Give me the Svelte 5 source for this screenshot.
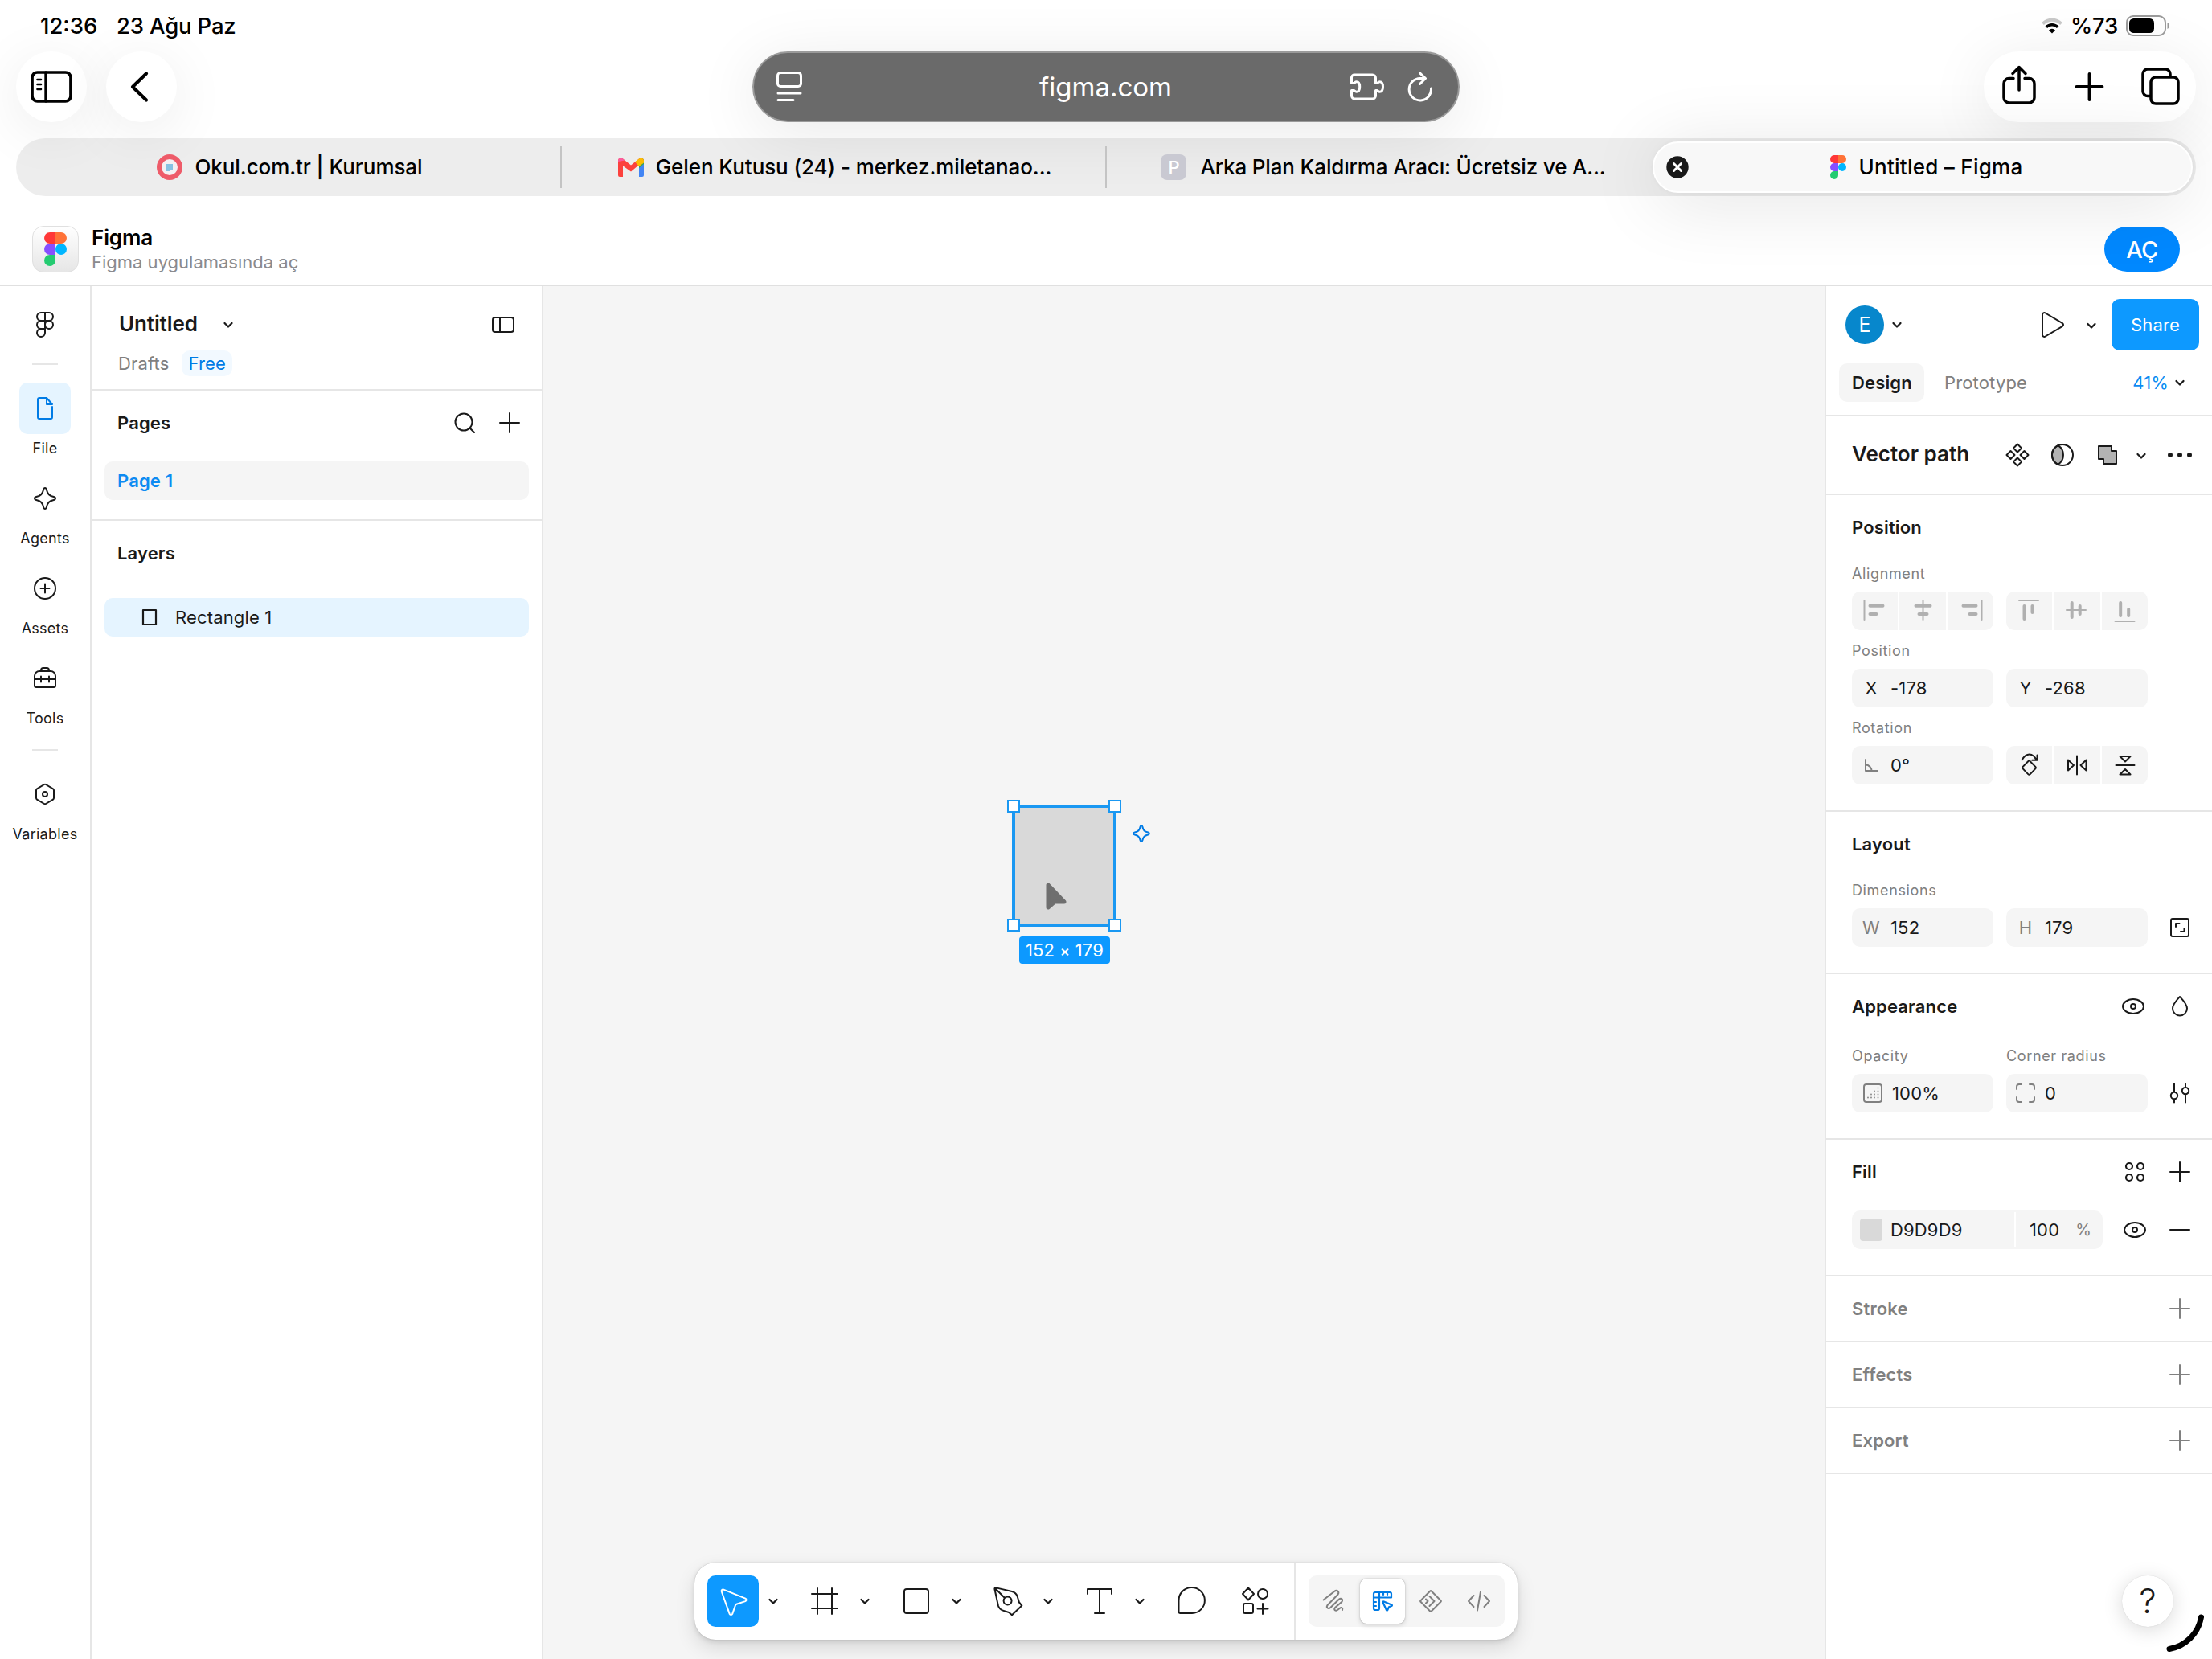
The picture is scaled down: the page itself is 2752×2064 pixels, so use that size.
<script>
    // every icon sits in a 48x48 box; w = stroke width, fill = solid shape
    const circle = (x, y, r) => `M${x - r} ${y}a${r} ${r} 0 1 0 ${2 * r} 0a${r} ${r} 0 1 0 ${-2 * r} 0z`;

    const icons = {
        figma: [{ d: 'M24 9h-5a5 5 0 0 0 0 10h5zM24 9h5a5 5 0 0 1 0 10h-5M24 19h-5a5 5 0 0 0 0 10h5zM24 29h-5a5 5 0 1 0 5 5z' + circle(29, 24, 5) }],
        file: [{ d: 'M26 11h-9a2 2 0 0 0-2 2v22a2 2 0 0 0 2 2h14a2 2 0 0 0 2-2V22M26 11v8h7z' }],
        sparkle: [{ d: 'M24 11c1 0 1.8 1 2.2 3 .8 4 3.8 7 7.8 7.8 2 .4 3 1.2 3 2.2s-1 1.8-3 2.2c-4 .8-7 3.8-7.8 7.8-.4 2-1.2 3-2.2 3s-1.8-1-2.2-3c-.8-4-3.8-7-7.8-7.8-2-.4-3-1.2-3-2.2s1-1.8 3-2.2c4-.8 7-3.8 7.8-7.8.4-2 1.2-3 2.2-3z' }],
        assets: [{ d: circle(24, 24, 13) + 'M24 18.5v11M18.5 24h11' }],
        tools: [{ d: 'M19 15v-1a3 3 0 0 1 3-3h4a3 3 0 0 1 3 3v1M11 33V21a6 6 0 0 1 6-6h14a6 6 0 0 1 6 6v12a2 2 0 0 1-2 2H13a2 2 0 0 1-2-2zM11 25h26M19 21.5v7M29 21.5v7' }],
        variables: [{ d: 'M23 12q1-.6 2 0l9 5.4q1 .6 1 1.8v9.6q0 1.200-1 1.8L25 36q-1 .6-2 0l-9-5.400q-1-.6-1-1.8v-9.600q0-1.200 1-1.8z' + circle(24, 24, 3) }],
        chevron: [{ d: 'M19.500 22l4.500 4.500 4.500-4.500', w: 2.3 }],
        panel: [{ d: 'M14 15h20a3 3 0 0 1 3 3v12a3 3 0 0 1-3 3H14a3 3 0 0 1-3-3V18a3 3 0 0 1 3-3zM20 15v18' }],
        search: [{ d: circle(23, 23, 10.5) + 'M30.500 30.500l5.500 5.500' }],
        plus: [{ d: 'M24 12v24M12 24h24' }],
        minus: [{ d: 'M12 24h24' }],
        layer: [{ d: 'M16 15h16v18H16z', w: 2.2 }],
        play: [{ d: 'M11 11.500a2.400 2.400 0 0 1 3.700-2L36 22.200a2.200 2.200 0 0 1 0 3.700L14.700 38.500a2.400 2.400 0 0 1-3.700-2z' }],
        component: [{ d: 'M24 10.500l5 5-5 5-5-5zM24 27.500l5 5-5 5-5-5zM15.500 19l5 5-5 5-5-5zM32.500 19l5 5-5 5-5-5z' }],
        mask: [{ d: 'M18.500 12.200a14 14 0 0 1 0 23.600A13 13 0 0 1 18.500 12.200z', fill: '#b3b3b3' }, { d: circle(24, 24, 13) }],
        union: [{ d: 'M13 13h16v6h6v16H19v-6h-6z', fill: '#b3b3b3' }],
        dots: [{ d: circle(12, 24, 2), w: 2, fill: 'currentColor' }, { d: circle(24, 24, 2), fill: 'currentColor' }, { d: circle(36, 24, 2), fill: 'currentColor' }],
        alignLeft: [{ d: 'M10.500 11v24' }, { d: 'M17.500 17.800h16M17.500 28h8', w: 4 }],
        alignCenter: [{ d: 'M24.500 11v24' }, { d: 'M15.500 17.800h18M19.500 28h10', w: 4 }],
        alignRight: [{ d: 'M37.500 11v24' }, { d: 'M14.500 17.800h16M22.500 28h8', w: 4 }],
        alignTop: [{ d: 'M11 11h24' }, { d: 'M17.500 18v16M27.500 18v8', w: 4 }],
        alignMiddle: [{ d: 'M11 23h24' }, { d: 'M17.700 14v18M27.700 18v10', w: 4 }],
        alignBottom: [{ d: 'M11.500 37h24' }, { d: 'M18.200 14v16M28.200 22v8', w: 4 }],
        angle: [{ d: 'M17 17v14h15M17 23.500a7.500 7.500 0 0 1 7.500 7.500' }],
        rotate: [{ d: 'M23.500 18.500q.7 0 1.300.7l6.700 6.900q1 1 0 2l-6.700 7q-1.300 1.300-2.600 0l-6.700-7q-1-1 0-2l6.700-6.900q.6-.7 1.300-.7zM14.500 17.500c5.500-9.300 13.500-9.300 18 0M33.500 11.500v6.300h-6.300' }],
        flipH: [{ d: 'M24 12.500v23M13 17.500v13l7-6.500zM35.500 17.500v13l-7-6.500z' }],
        flipV: [{ d: 'M12.500 24h23M17.500 13h13L24 19.500zM17.500 35.500h13L24 29z' }],
        resize: [{ d: 'M15 13h18a2 2 0 0 1 2 2v18a2 2 0 0 1-2 2H15a2 2 0 0 1-2-2V15a2 2 0 0 1 2-2zM19 23v-4h4.500M29.500 25v4H25' }],
        eye: [{ d: 'M24 15c-7.500 0-13 4.800-13 9s5.500 9 13 9 13-4.800 13-9-5.500-9-13-9z' + circle(24, 24, 3) }],
        drop: [{ d: 'M24 12c4 4.300 9 9.500 9 14.500a9 9 0 0 1-18 0c0-5 5-10.200 9-14.500z' }],
        opacity: [
            { d: 'M16 13h16a3 3 0 0 1 3 3v16a3 3 0 0 1-3 3H16a3 3 0 0 1-3-3V16a3 3 0 0 1 3-3z' },
            { d: 'M18 29.500v.01M22 29.500v.01M26 29.500v.01M30.500 29.500v.01M22 25.500v.01M26 25.500v.01M30.500 25.500v.01M26 21.500v.01M30.500 21.500v.01M30.500 17.500v.01', w: 1.8 }
        ],
        corners: [{ d: 'M13 19v-3a3 3 0 0 1 3-3h3M29 13h3a3 3 0 0 1 3 3v3M35 29v3a3 3 0 0 1-3 3h-3M19 35h-3a3 3 0 0 1-3-3v-3' }],
        sliders: [{ d: 'M17 12.500V22M17 31.500v4M31 12.500v4M31 26v9.500' + circle(17, 27, 4.2) + circle(31, 21, 4.2) }],
        styles: [{ d: circle(17, 17, 4) + circle(31, 17, 4) + circle(17, 31, 4) + circle(31, 31, 4), w: 2.2 }],
        move: [{ d: 'M9.700 12a1.900 1.900 0 0 1 2.500-2.400l27.200 11a1.900 1.900 0 0 1-.1 3.500l-11.100 3.700a2 2 0 0 0-1.200 1.200l-3.800 10.900a1.900 1.900 0 0 1-3.500 0z' }],
        frame: [{ d: 'M15 8v32M33 8v32M8 15h32M8 33h32' }],
        rect: [{ d: 'M12 9h24a3 3 0 0 1 3 3v24a3 3 0 0 1-3 3H12a3 3 0 0 1-3-3V12a3 3 0 0 1 3-3z' }],
        pen: [{ d: 'M7.500 9.200q-.4-2.200 1.800-1.800L29 12c3.500 1 5.500 2.700 6.600 6l2.400 7.500 3.300 4L29 41.300 25.200 38l-7.400-2.400c-3.300-1-5-3-6-6.400zM8 8l12 12' + circle(23.6, 23.6, 5) }],
        text: [{ d: 'M9 15V9h30v6M24 9v30M18 39h12' }],
        comment: [{ d: 'M8.500 37V23.500A16.200 16 0 1 1 25 39H10.500a2 2 0 0 1-2-2z' }],
        actions: [{ d: 'M15 7.500l7 7.500-7 7.500L8 15zM33 27v13M26.500 33.500h13M11 27h8a2 2 0 0 1 2 2v8a2 2 0 0 1-2 2h-8a2 2 0 0 1-2-2v-8a2 2 0 0 1 2-2z' + circle(33, 15, 6) }],
        draw: [{ d: 'M10.500 22.500L24 12c3.500-2.700 6.800.3 4.500 3.800L15.500 29c-2 3 1 5.200 3.800 3L30 21.500c2.700-2 5.200.5 3.500 3.200L25 32c-2 2.800.5 4.800 3 3l3-2.300c2.200-1.500 4 .3 3 2.300' }],
        design: [{ d: 'M13 15a2 2 0 0 1 2-2h18a2 2 0 0 1 2 2v4.500H20V33a2 2 0 0 1-2 2h-3a2 2 0 0 1-2-2zM20 13v6.500h-7M25 13v3M30 13v3M13 25h3M13 30h3M24.500 25.500q-.3-1.500 1.200-1l9.600 4q1.300.8 0 1.500l-3.300 1.300-1.600 3.500q-.8 1.300-1.600 0z', w: 2.2 }],
        dev: [{ d: 'M24.800 11.500l11.700 11.700q.8.8 0 1.600L24.800 36.500q-.8.800-1.600 0L11.500 24.800q-.8-.8 0-1.600l11.700-11.700q.8-.8 1.600 0zM22.500 18l6 6-6 6M18 21.500l2.500 2.500-2.500 2.500' }],
        code: [{ d: 'M17.500 17L11 24l6.500 7M30.500 17l6.500 7-6.500 7M26 12.500l-4 23' }]
    };

    const tabs = [
        { icon: 'okul', title: 'Okul.com.tr | Kurumsal' },
        { icon: 'gmail', title: 'Gelen Kutusu (24) - merkez.miletanao...' },
        { icon: 'letter', title: 'Arka Plan Kaldırma Aracı: Ücretsiz ve A...' },
        { icon: 'figma', title: 'Untitled – Figma', active: true }
    ];

    const railItems = [
        { icon: 'file', label: 'File', active: true },
        { icon: 'sparkle', label: 'Agents' },
        { icon: 'assets', label: 'Assets' },
        { icon: 'tools', label: 'Tools' }
    ];

    const tools = ['move', 'frame', 'rect', 'pen', 'text'];
    const modes = ['draw', 'design', 'dev', 'code'];
    const alignments = [
        ['alignLeft', 'alignCenter', 'alignRight'],
        ['alignTop', 'alignMiddle', 'alignBottom']
    ];
    const emptySections = ['Stroke', 'Effects', 'Export'];
</script>

{#snippet icon(name)}
    <svg class="icon" viewBox="0 0 48 48">
        {#each icons[name] as p}
            <path d={p.d} fill={p.fill ?? 'none'} stroke="currentColor" stroke-width={p.w ?? 2} stroke-linecap="round" stroke-linejoin="round" />
        {/each}
    </svg>
{/snippet}

{#snippet figmaMark(cls)}
    <svg class={cls} viewBox="0 0 20 30">
        <path d="M10 0H5a5 5 0 0 0 0 10h5z" fill="#ff3737" />
        <path d="M10 0h5a5 5 0 0 1 0 10h-5z" fill="#ff7237" />
        <path d="M10 10H5a5 5 0 0 0 0 10h5z" fill="#874fff" />
        <circle cx="15" cy="15" r="5" fill="#00b6ff" />
        <path d="M10 20H5a5 5 0 1 0 5 5z" fill="#24cb71" />
    </svg>
{/snippet}

<div class="screen">
    <header class="browser">
        <div class="status">
            <span class="clock">12:36</span>
            <span class="date">23 Ağu Paz</span>
            <svg class="wifi" viewBox="0 0 28 20">
                <path d="M2.500 7.500a16.500 16.500 0 0 1 23 0" fill="none" stroke="#c9c9c9" stroke-width="4" />
                <path d="M6.800 11.800a10.200 10.200 0 0 1 14.400 0" fill="none" stroke="#000" stroke-width="3.600" />
                <path d="M14 19.500l-4-4a5.600 5.600 0 0 1 8 0z" fill="#000" />
            </svg>
            <span class="percent">%73</span>
            <svg class="battery" viewBox="0 0 56 26">
                <rect x="1" y="1" width="48" height="24" rx="8" fill="none" stroke="#9b9b9b" stroke-width="2" />
                <rect x="4" y="4" width="31" height="18" rx="5.500" fill="#000" />
                <path d="M51.500 9v8c3.300-1.300 3.300-6.700 0-8z" fill="#9b9b9b" />
            </svg>
        </div>

        <div class="nav">
            <div class="nav-side">
                <div class="round">
                    <svg width="52" height="40" viewBox="0 0 52 40" fill="none" stroke="#000" stroke-width="3.700" stroke-linecap="round">
                        <rect x="2" y="2" width="48" height="36" rx="6.500" />
                        <path d="M19 2v36" stroke-width="3.400" />
                        <path d="M8.500 11h4.500M8.500 17h4.500M8.500 23h4.500" stroke-width="2.600" />
                    </svg>
                </div>
                <div class="round">
                    <svg width="26" height="40" viewBox="0 0 26 40" fill="none" stroke="#000" stroke-width="4.200" stroke-linecap="round" stroke-linejoin="round">
                        <path d="M21 3.500L4 20l17 16.500" />
                    </svg>
                </div>
            </div>
            <div class="address">
                <svg width="32" height="38" viewBox="0 0 32 38" fill="none" stroke="#fff" stroke-width="3" stroke-linecap="round">
                    <rect x="1.500" y="1.500" width="29" height="17" rx="3.500" />
                    <path d="M2 27h28M2 35.500h19" />
                </svg>
                <span class="url">figma.com</span>
                <svg class="puzzle" width="42" height="34" viewBox="0 0 42 34" fill="none" stroke="#fff" stroke-width="3" stroke-linejoin="round">
                    <path d="M5 2h22.500a4 4 0 0 1 4 4v6.500h1.700c1 0 1.300-1.700 3.300-1.700 2.600 0 4 2.500 4 6.200s-1.400 6.200-4 6.200c-2 0-2.300-1.700-3.300-1.700h-1.700V28a4 4 0 0 1-4 4H5.500a4 4 0 0 1-4-4v-6.500h2.800c1 0 1.500 1.700 3.400 1.700 2.600 0 4-2.500 4-6.200s-1.400-6.200-4-6.200c-1.900 0-2.400 1.700-3.400 1.700H1.500V5.500A3.500 3.500 0 0 1 5 2z" />
                </svg>
                <svg width="32" height="38" viewBox="0 0 32 38" fill="none" stroke="#fff" stroke-width="3" stroke-linecap="round" stroke-linejoin="round">
                    <path d="M29.500 21A13.700 13.700 0 1 1 16 8.500h6M15.500 1.800l7 6.700-7 7" />
                </svg>
            </div>
            <div class="nav-side end">
                <div class="actions">
                    <svg width="42" height="50" viewBox="0 0 42 50" fill="none" stroke="#000" stroke-width="3.500" stroke-linecap="round" stroke-linejoin="round">
                        <path d="M14 16.500H8.500a6.500 6.500 0 0 0-6.500 6.500V40.500a6.500 6.500 0 0 0 6.500 6.500h25a6.500 6.500 0 0 0 6.500-6.500V23a6.500 6.500 0 0 0-6.500-6.500h-5.500M21 31V3M13 10.500L21 2.500l8 8" />
                    </svg>
                    <svg width="38" height="38" viewBox="0 0 38 38" fill="none" stroke="#000" stroke-width="3.800" stroke-linecap="round">
                        <path d="M19.500 3v32M3.500 19h32" />
                    </svg>
                    <svg width="48" height="48" viewBox="0 0 48 48" fill="none" stroke="#000" stroke-width="3.500">
                        <path d="M12 35.500H8a6 6 0 0 1-6-6V8a6 6 0 0 1 6-6h22a6 6 0 0 1 6 6v4" />
                        <rect x="12" y="12" width="34" height="33" rx="6" />
                    </svg>
                </div>
            </div>
        </div>

        <div class="tabs">
            {#each tabs as tab}
                <div class="tab" class:active={tab.active} class:centered={tab.icon === 'letter'}>
                    {#if tab.active}
                        <svg class="close" viewBox="0 0 28 28">
                            <circle cx="14" cy="14" r="13.700" fill="#1a1a1a" />
                            <path d="M9.500 9.500l9 9M18.500 9.500l-9 9" stroke="#fff" stroke-width="3" stroke-linecap="round" />
                        </svg>
                    {/if}
                    {#if tab.icon === 'okul'}
                        <svg class="favicon" viewBox="0 0 32 32">
                            <circle cx="16" cy="16" r="13" fill="#f4f0f2" stroke="#ee5b69" stroke-width="6" />
                            <path d="M12 12h8v7h-4v2h-4z" fill="#86c2e2" />
                        </svg>
                    {:else if tab.icon === 'gmail'}
                        <svg class="favicon" viewBox="0 0 32 32">
                            <path d="M26 10.500V28h4a2 2 0 0 0 2-2V8z" fill="#4285f4" />
                            <path d="M26 8v9l6-5V8c0-3-3-5-6-2z" fill="#34a853" />
                            <path d="M0 8l6 4v16H2a2 2 0 0 1-2-2z" fill="#fc413d" />
                            <path d="M0 8c0-3.500 3.500-5 6-2.500l10 8 10-8c1.500-1.500 6-1 6 2.500L16 21.500 0 10z" fill="#fc413d" />
                            <path d="M21 9.500l5-4c2.500-2 6-.5 6 2.500v2.500l-6 4.500z" fill="#fbbc04" />
                            <path d="M0 9V8c0-3.500 3.500-5 6-2.500l2.500 2z" fill="#fb5c9b" />
                        </svg>
                    {:else if tab.icon === 'letter'}
                        <span class="favicon letter">P</span>
                    {:else}
                        {@render figmaMark('mark-tab')}
                    {/if}
                    <span class="tab-title">{tab.title}</span>
                </div>
            {/each}
        </div>

        <div class="banner">
            <div class="app-icon">{@render figmaMark('mark-app')}</div>
            <div class="app-text">
                <span class="app-name">Figma</span>
                <span class="app-sub">Figma uygulamasında aç</span>
            </div>
            <span class="open">AÇ</span>
        </div>
    </header>

    <main class="editor">
        <nav class="rail">
            <div class="rail-logo">{@render icon('figma')}</div>
            <div class="rail-line"></div>
            <div class="rail-group">
                {#each railItems as item}
                    <div class="rail-item" class:active={item.active}>
                        <div class="rail-icon">{@render icon(item.icon)}</div>
                        <span>{item.label}</span>
                    </div>
                {/each}
            </div>
            <div class="rail-line"></div>
            <div class="rail-item">
                <div class="rail-icon">{@render icon('variables')}</div>
                <span>Variables</span>
            </div>
        </nav>

        <aside class="left">
            <section class="doc">
                <div class="doc-row">
                    <span class="doc-name">Untitled</span>
                    {@render icon('chevron')}
                    <span class="grow"></span>
                    {@render icon('panel')}
                </div>
                <div class="doc-sub">
                    <span>Drafts</span>
                    <span class="badge">Free</span>
                </div>
            </section>
            <section class="pages">
                <div class="list-head">
                    <span class="strong">Pages</span>
                    <span class="grow"></span>
                    {@render icon('search')}
                    {@render icon('plus')}
                </div>
                <div class="page">Page 1</div>
            </section>
            <section class="layers">
                <div class="list-head"><span class="strong">Layers</span></div>
                <div class="layer">{@render icon('layer')}<span>Rectangle 1</span></div>
            </section>
        </aside>

        <div class="canvas">
            <div class="shape">
                <i class="handle tl"></i>
                <i class="handle tr"></i>
                <i class="handle bl"></i>
                <i class="handle br"></i>
                <span class="size">152 <small>×</small> 179</span>
            </div>
            <div class="spark">{@render icon('sparkle')}</div>
            <svg class="pointer" viewBox="0 0 26 34">
                <path d="M3 3v28l8-7h12z" fill="#6f6f6f" stroke="#6f6f6f" stroke-width="5" stroke-linejoin="round" />
            </svg>

            <div class="toolbar">
                <div class="tools">
                    {#each tools as tool}
                        <div class="tool" class:active={tool === 'move'}>{@render icon(tool)}</div>
                        <div class="tool-more">{@render icon('chevron')}</div>
                    {/each}
                    <div class="tool">{@render icon('comment')}</div>
                    <div class="tool last">{@render icon('actions')}</div>
                </div>
                <div class="modes">
                    {#each modes as mode}
                        <div class="mode" class:active={mode === 'design'}>{@render icon(mode)}</div>
                    {/each}
                </div>
            </div>
        </div>

        <aside class="right">
            <section class="top">
                <div class="share-row">
                    <span class="avatar">E</span>
                    <span class="avatar-more">{@render icon('chevron')}</span>
                    <span class="grow"></span>
                    {@render icon('play')}
                    <span class="play-more">{@render icon('chevron')}</span>
                    <span class="share">Share</span>
                </div>
                <div class="mode-row">
                    <span class="mode-tab on">Design</span>
                    <span class="mode-tab">Prototype</span>
                    <span class="grow"></span>
                    <span class="zoom">41%</span>
                    <span class="zoom-more">{@render icon('chevron')}</span>
                </div>
            </section>

            <section class="selection">
                <span class="selection-name">Vector path</span>
                <span class="grow"></span>
                {@render icon('component')}
                {@render icon('mask')}
                {@render icon('union')}
                <span class="union-more">{@render icon('chevron')}</span>
                {@render icon('dots')}
            </section>

            <section class="position">
                <div class="head"><span class="strong">Position</span></div>
                <div class="label">Alignment</div>
                <div class="fields">
                    {#each alignments as group}
                        <div class="segments muted">
                            {#each group as name}
                                <span>{@render icon(name)}</span>
                            {/each}
                        </div>
                    {/each}
                </div>
                <div class="label second">Position</div>
                <div class="fields">
                    <div class="field"><span class="key dark">X</span>-178</div>
                    <div class="field"><span class="key dark">Y</span>-268</div>
                </div>
                <div class="label second">Rotation</div>
                <div class="fields">
                    <div class="field"><span class="key">{@render icon('angle')}</span>0°</div>
                    <div class="segments">
                        <span>{@render icon('rotate')}</span>
                        <span>{@render icon('flipH')}</span>
                        <span>{@render icon('flipV')}</span>
                    </div>
                </div>
            </section>

            <section class="layout">
                <div class="head"><span class="strong">Layout</span></div>
                <div class="label">Dimensions</div>
                <div class="fields">
                    <div class="field"><span class="key">W</span>152</div>
                    <div class="field"><span class="key">H</span>179</div>
                    {@render icon('resize')}
                </div>
            </section>

            <section class="appearance">
                <div class="head">
                    <span class="strong">Appearance</span>
                    <span class="grow"></span>
                    {@render icon('eye')}
                    <span class="drop">{@render icon('drop')}</span>
                </div>
                <div class="label pair"><span>Opacity</span><span>Corner radius</span></div>
                <div class="fields">
                    <div class="field opacity"><span class="key">{@render icon('opacity')}</span>100%</div>
                    <div class="field"><span class="key">{@render icon('corners')}</span>0</div>
                    {@render icon('sliders')}
                </div>
            </section>

            <section class="fill">
                <div class="head">
                    <span class="strong">Fill</span>
                    <span class="grow"></span>
                    {@render icon('styles')}
                    <span class="add">{@render icon('plus')}</span>
                </div>
                <div class="paint-row">
                    <div class="paint">
                        <span class="hex"><i class="swatch"></i>D9D9D9</span>
                        <span class="alpha">100<em>%</em></span>
                    </div>
                    <span class="grow"></span>
                    {@render icon('eye')}
                    <span class="add">{@render icon('minus')}</span>
                </div>
            </section>

            {#each emptySections as name}
                <section class="empty">
                    <span class="strong">{name}</span>
                    <span class="grow"></span>
                    {@render icon('plus')}
                </section>
            {/each}

            <div class="help">?</div>
            <svg class="corner" viewBox="0 0 52 52">
                <path d="M43.500 4A48.500 48.500 0 0 1 4 43.500" fill="none" stroke="#000" stroke-width="7" stroke-linecap="round" />
            </svg>
        </aside>
    </main>
</div>

<style>
    :global(body) {
        margin: 0;
        background: #fff;
    }

    .screen {
        width: 2752px;
        height: 2064px;
        overflow: hidden;
        display: flex;
        flex-direction: column;
        background: #fff;
        color: #1a1a1a;
        font-family: Inter, "Liberation Sans", sans-serif;
        font-size: 22px;
        line-height: 32px;
        letter-spacing: 0.007em;
    }

    .screen * {
        box-sizing: border-box;
    }

    span {
        white-space: nowrap;
    }

    .icon {
        width: 48px;
        height: 48px;
        flex: none;
        display: block;
    }

    .grow {
        flex: 1;
    }

    .strong {
        font-weight: 580;
    }

    /* Browser chrome */
    .browser {
        height: 356px;
        border-bottom: 1px solid #e0e0e0;
        color: #000;
        letter-spacing: 0;
        overflow: hidden;
        flex: none;
    }

    .status {
        height: 64px;
        padding: 0 52px 0 50px;
        display: flex;
        align-items: center;
        font-size: 27.500px;
        font-weight: 500;
    }

    .clock {
        width: 95px;
    }

    .date {
        flex: 1;
        letter-spacing: -0.006em;
    }

    .wifi {
        width: 28px;
        height: 20px;
    }

    .percent {
        margin: 0 10px 0 9px;
        letter-spacing: -0.01em;
    }

    .battery {
        width: 56px;
        height: 26px;
        margin-right: -1px;
    }

    .nav {
        height: 88px;
        padding: 0 20px;
        display: flex;
        justify-content: space-between;
    }

    .nav-side {
        width: 264px;
        display: flex;
        gap: 24px;
    }

    .round {
        width: 88px;
        height: 88px;
        border-radius: 50%;
        display: flex;
        align-items: center;
        justify-content: center;
        background: #fff;
        box-shadow: 0 12px 70px rgba(0, 0, 0, 0.08);
    }

    .round + .round svg {
        margin-right: 4px;
    }

    .address {
        width: 880px;
        padding: 0 31px 0 28px;
        display: flex;
        align-items: center;
        border: 2px solid #9a9a9a;
        border-radius: 44px;
        background: #6a6a6a;
        box-shadow: 0 12px 80px rgba(0, 0, 0, 0.09);
        color: #fff;
    }

    .url {
        flex: 1;
        padding-left: 73px;
        text-align: center;
        font-size: 33px;
    }

    .puzzle {
        margin-right: 29px;
    }

    .actions {
        width: 264px;
        height: 88px;
        padding: 0 20px 0 23px;
        display: flex;
        align-items: center;
        justify-content: space-between;
        border-radius: 44px;
        background: #fff;
        box-shadow: 0 12px 80px rgba(0, 0, 0, 0.09);
    }

    .actions svg:first-child {
        margin-top: -4px;
    }

    .tabs {
        height: 72px;
        margin: 20px 20px 0;
        display: grid;
        grid-template-columns: repeat(4, 1fr);
        border-radius: 36px;
        background: rgba(0, 0, 0, 0.07);
    }

    .tab {
        position: relative;
        padding-left: 3px;
        display: flex;
        align-items: center;
        justify-content: center;
        gap: 15px;
        font-size: 26px;
        font-weight: 500;
        letter-spacing: -0.003em;
    }

    .tab.centered {
        padding-left: 12px;
        gap: 17px;
        letter-spacing: -0.006em;
    }

    .tab:nth-child(-n + 2)::after {
        content: "";
        position: absolute;
        right: -1px;
        top: 10px;
        width: 2px;
        height: 52px;
        background: #c4c4c4;
    }

    .tab.active {
        gap: 16px;
        margin: 4px 4px 4px 2px;
        padding-left: 9px;
        border: 2px solid #fff;
        border-radius: 32px;
        background: #f8f8f8;
        box-shadow: 0 10px 90px rgba(0, 0, 0, 0.12), 0 0 6px rgba(0, 0, 0, 0.04);
        letter-spacing: 0.01em;
    }

    .close {
        position: absolute;
        left: 15px;
        width: 28px;
        height: 28px;
    }

    .favicon {
        width: 32px;
        height: 32px;
        flex: none;
    }

    .letter {
        border-radius: 8px;
        background: #c9c9d2;
        color: #fff;
        font-size: 22px;
        text-align: center;
    }

    .mark-tab {
        width: 20px;
        height: 30px;
    }

    .banner {
        height: 111px;
        padding: 21px 40px 0;
        display: flex;
        align-items: center;
    }

    .app-icon {
        width: 58px;
        height: 58px;
        display: flex;
        align-items: center;
        justify-content: center;
        border: 1px solid #e0e0e0;
        border-radius: 14px;
        background: linear-gradient(#fff, #e6e6e6);
    }

    .mark-app {
        width: 28px;
        height: 42px;
    }

    .app-text {
        flex: 1;
        margin: 2px 0 0 16px;
        display: flex;
        flex-direction: column;
    }

    .app-name {
        font-size: 26px;
        font-weight: 600;
        line-height: 30px;
        letter-spacing: -0.005em;
    }

    .app-sub {
        color: #8a8a8e;
        line-height: 30px;
    }

    .open {
        width: 94px;
        height: 56px;
        border-radius: 28px;
        background: #0088ff;
        color: #fff;
        font-size: 29px;
        font-weight: 500;
        line-height: 57px;
        text-align: center;
        letter-spacing: -0.02em;
    }

    /* Editor */
    .editor {
        flex: 1;
        min-height: 0;
        display: grid;
        grid-template-columns: 114px 562px 1594px 482px;
    }

    .rail {
        padding-top: 24px;
        display: flex;
        flex-direction: column;
        align-items: center;
        border-right: 2px solid #e6e6e6;
    }

    .rail-line {
        width: 32px;
        height: 2px;
        margin: 8px 0 22px;
        background: #e6e6e6;
    }

    .rail-logo {
        margin-bottom: 16px;
    }

    .rail-item {
        width: 112px;
        height: 112px;
        display: flex;
        flex-direction: column;
        align-items: center;
        font-size: 18px;
        line-height: 24px;
        letter-spacing: 0.015em;
    }

    .rail-item span {
        margin-top: 6px;
    }

    .rail-icon {
        width: 64px;
        height: 64px;
        padding: 8px;
        border-radius: 10px;
    }

    .rail-item.active .rail-icon {
        background: #e5f4ff;
        color: #007be5;
    }

    .left {
        border-right: 2px solid #e6e6e6;
    }

    .doc {
        height: 130px;
        padding: 24px 24px 0 33px;
        border-bottom: 2px solid #e6e6e6;
    }

    .doc-row {
        height: 48px;
        display: flex;
        align-items: center;
    }

    .doc-name {
        width: 113px;
        margin-top: -2px;
        padding-left: 1px;
        font-size: 26px;
        font-weight: 600;
        letter-spacing: -0.004em;
    }

    .doc-sub {
        margin-top: 8px;
        display: flex;
        gap: 16px;
        color: #808080;
    }

    .badge {
        padding: 0 8px;
        border-radius: 10px;
        background: #f2f9ff;
        color: #007be5;
    }

    .pages {
        height: 162px;
        padding: 16px 16px 0;
        border-bottom: 2px solid #e6e6e6;
    }

    .list-head {
        height: 48px;
        display: flex;
        align-items: center;
        gap: 8px;
        padding-left: 16px;
    }

    .page {
        height: 48px;
        margin-top: 24px;
        padding-left: 16px;
        border-radius: 10px;
        background: #f5f5f5;
        color: #0d8bf2;
        font-weight: 580;
        line-height: 48px;
    }

    .layers {
        padding: 16px 16px 0;
    }

    .layer {
        height: 48px;
        margin-top: 32px;
        padding-left: 32px;
        display: flex;
        align-items: center;
        gap: 8px;
        border-radius: 10px;
        background: #e5f4ff;
    }

    .canvas {
        position: relative;
        background: #f5f5f5;
    }

    .shape {
        position: absolute;
        left: 583px;
        top: 645px;
        width: 130px;
        height: 152px;
        border: 4px solid #1a98f2;
        background: #d9d9d9;
    }

    .handle {
        position: absolute;
        width: 16px;
        height: 16px;
        border: 2px solid #1a98f2;
        background: #fff;
    }

    .tl { left: -10px; top: -10px; }
    .tr { right: -10px; top: -10px; }
    .bl { left: -10px; bottom: -10px; }
    .br { right: -10px; bottom: -10px; }

    .size {
        position: absolute;
        left: 5px;
        top: 160px;
        width: 113px;
        height: 34px;
        border-radius: 4px;
        background: #0d99ff;
        color: #fff;
        line-height: 34px;
        text-align: center;
    }

    .size small {
        font-size: 19px;
        font-weight: 500;
        line-height: 1;
    }

    .spark {
        position: absolute;
        left: 726px;
        top: 663px;
        color: #007be5;
    }

    .spark :global(svg) {
        width: 36px;
        height: 36px;
    }

    .spark :global(path) {
        stroke-width: 2.700;
    }

    .pointer {
        position: absolute;
        left: 625px;
        top: 742px;
        width: 26px;
        height: 34px;
    }

    .toolbar {
        position: absolute;
        left: 188px;
        top: 1588px;
        height: 96px;
        display: flex;
        border-radius: 26px;
        background: #fff;
        box-shadow: 0 0 1px rgba(0, 0, 0, 0.3), 0 2px 6px rgba(0, 0, 0, 0.12), 0 10px 24px rgba(0, 0, 0, 0.12);
    }

    .tools {
        padding: 16px;
        display: flex;
        border-right: 2px solid #e6e6e6;
    }

    .tool {
        width: 64px;
        height: 64px;
        padding: 8px;
        border-radius: 10px;
    }

    .tool.active {
        background: #0d99ff;
        color: #fff;
    }

    .tool.last {
        margin-left: 16px;
    }

    .tool-more {
        width: 50px;
        padding: 8px 0 0;
        display: flex;
        justify-content: flex-start;
    }

    .tool-more :global(svg) {
        margin-left: -6px;
    }

    .modes {
        margin: 16px;
        padding: 4px 2px;
        display: flex;
        border-radius: 10px;
        background: #f5f5f5;
        color: #808080;
    }

    .mode {
        width: 56px;
        height: 56px;
        margin: 0 2px;
        padding: 4px;
        border-radius: 8px;
    }

    .mode.active {
        background: #fff;
        color: #007be5;
        box-shadow: 0 0 1px rgba(0, 0, 0, 0.5), 0 2px 6px rgba(0, 0, 0, 0.15);
    }

    /* Properties */
    .right {
        position: relative;
        border-left: 2px solid #e6e6e6;
    }

    .right > section {
        padding: 0 16px 0 32px;
        border-bottom: 2px solid #e6e6e6;
    }

    .right > .top {
        height: 162px;
        padding: 16px 16px 0;
    }

    .share-row {
        height: 64px;
        display: flex;
        align-items: center;
    }

    .avatar {
        width: 48px;
        height: 48px;
        margin-left: 8px;
        border-radius: 50%;
        background: #0787cc;
        color: #fff;
        font-size: 25px;
        line-height: 49px;
        text-align: center;
    }

    .avatar-more {
        margin-left: -8px;
    }

    .play-more {
        margin: 2px 1px 0 0;
    }

    .share {
        width: 109px;
        height: 64px;
        border-radius: 10px;
        background: #0d99ff;
        color: #fff;
        line-height: 64px;
        text-align: center;
    }

    .mode-row {
        height: 48px;
        margin-top: 16px;
        display: flex;
        align-items: center;
    }

    .mode-tab {
        height: 48px;
        margin-right: 8px;
        padding: 0 16px;
        border-radius: 10px;
        color: #808080;
        line-height: 48px;
    }

    .mode-tab.on {
        width: 106px;
        margin-right: 9px;
        background: #f5f5f5;
        color: #1a1a1a;
        font-weight: 580;
    }

    .zoom {
        color: #0d8bf2;
    }

    .zoom-more {
        margin: 0 0 0 -10px;
    }

    .right > .selection {
        height: 98px;
        display: flex;
        align-items: center;
    }

    .selection-name {
        margin-top: -2px;
        font-size: 26px;
        font-weight: 580;
        letter-spacing: 0;
    }

    .selection :global(svg) {
        margin-left: 8px;
    }

    .union-more {
        width: 24px;
        margin: 2px 4px 0 6px;
        display: flex;
        justify-content: center;
    }

    .selection .union-more :global(svg) {
        margin-left: 0;
    }

    .head {
        height: 80px;
        display: flex;
        align-items: center;
    }

    .label {
        height: 40px;
        color: #808080;
        font-size: 18px;
        line-height: 36px;
        letter-spacing: 0.035em;
    }

    .label.second {
        height: 48px;
        line-height: 52px;
    }

    .fields {
        display: flex;
        gap: 16px;
    }

    .field {
        width: 176px;
        height: 48px;
        display: flex;
        border-radius: 10px;
        background: #f5f5f5;
        line-height: 48px;
    }

    .key {
        width: 48px;
        color: #808080;
        text-align: center;
    }

    .key.dark {
        color: #1a1a1a;
    }

    .opacity {
        padding-left: 2px;
    }

    .segments {
        width: 176px;
        height: 48px;
        display: grid;
        grid-template-columns: 57px 58px 57px;
        gap: 2px;
        border-radius: 10px;
        overflow: hidden;
    }

    .segments span {
        display: flex;
        justify-content: center;
        background: #f5f5f5;
    }

    .muted {
        color: #b0b0b0;
    }

    .position {
        height: 394px;
    }

    .layout {
        height: 202px;
    }

    .appearance {
        height: 206px;
    }

    .appearance .drop {
        margin-left: 10px;
    }

    .appearance .label {
        height: 44px;
        line-height: 44px;
    }

    .pair span {
        display: inline-block;
        width: 192px;
    }

    .fill {
        height: 170px;
    }

    .add {
        margin-left: 8px;
    }

    .paint-row {
        margin-top: 8px;
        display: flex;
    }

    .paint {
        width: 312px;
        height: 48px;
        display: flex;
        border-radius: 10px;
        background: #f5f5f5;
        line-height: 48px;
    }

    .hex {
        width: 202px;
        padding-left: 10px;
        display: flex;
        align-items: center;
    }

    .swatch {
        width: 28px;
        height: 28px;
        margin-right: 10px;
        border-radius: 4px;
        background: #d9d9d9;
    }

    .alpha {
        flex: 1;
        height: 44px;
        margin-top: 2px;
        padding: 0 14px 0 17px;
        display: flex;
        justify-content: space-between;
        border-left: 2px solid #fff;
        line-height: 44px;
    }

    .alpha em {
        color: #808080;
        font-size: 20px;
        font-style: normal;
    }

    .empty {
        height: 82px;
        display: flex;
        align-items: center;
        color: #808080;
    }

    .help {
        position: absolute;
        left: 368px;
        top: 1604px;
        width: 64px;
        height: 64px;
        border-radius: 50%;
        background: #fff;
        box-shadow: 0 0 1px rgba(0, 0, 0, 0.2), 0 4px 24px rgba(0, 0, 0, 0.15);
        font-size: 42px;
        font-weight: 350;
        line-height: 64px;
        text-align: center;
    }

    .corner {
        position: absolute;
        left: 423px;
        top: 1652px;
        width: 52px;
        height: 52px;
    }
</style>
